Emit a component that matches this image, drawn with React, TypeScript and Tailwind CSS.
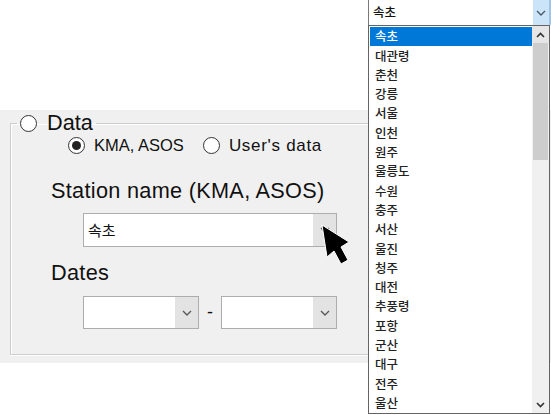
import React from "react";

const stations = [
  "속초", "대관령", "춘천", "강릉", "서울", "인천", "원주", "울릉도", "수원", "충주",
  "서산", "울진", "청주", "대전", "추풍령", "포항", "군산", "대구", "전주", "울산",
];

const kr = "font-['Noto_Sans_CJK_KR','Noto_Sans',sans-serif]";

function Chevron({ color = "#5a5a5a" }: { color?: string }) {
  return (
    <svg width="10" height="6" viewBox="0 0 10 6">
      <polyline points="1,1 5,5 9,1" fill="none" stroke={color} strokeWidth="1.4" />
    </svg>
  );
}

function Radio({ checked }: { checked?: boolean }) {
  return (
    <div className="w-[17px] h-[17px] rounded-full border border-[#333] bg-white flex items-center justify-center flex-none">
      {checked && <div className="w-[9px] h-[9px] rounded-full bg-[#222]" />}
    </div>
  );
}

function Combo({ w, h, text }: { w: string; h: string; text?: string }) {
  return (
    <div className={`${w} ${h} flex border border-[#adadad] bg-white`}>
      <div className={`flex-1 flex items-center pl-[4px] text-[15px] text-[#111] ${kr}`}>{text}</div>
      <div className="w-[23px] bg-[#e3e3e3] flex items-center justify-center">
        <Chevron />
      </div>
    </div>
  );
}

export default function App() {
  return (
    <div className="relative w-[551px] h-[415px] bg-white overflow-hidden font-['Liberation_Sans',Arial,sans-serif] text-[#111]">
      {/* Form panel */}
      <div className="mt-[110px] h-[253px] bg-[#f0f0f0] pt-[2px] pl-[10px]">
        <fieldset className="w-[440px] h-[243px] border border-[#cdcdcd] shadow-[1px_1px_0_#fff,inset_1px_1px_0_#fff]">
          <legend className="ml-[6px] px-[3px] h-[22px] flex items-center gap-[10px] text-[21.7px] leading-[22px]">
            <Radio />
            <span>Data</span>
          </legend>

          <div className="mt-[2px] ml-[57px] h-[19px] flex items-center text-[16.5px] leading-[19px]">
            <Radio checked />
            <span className="ml-[9px]">KMA, ASOS</span>
            <div className="ml-[19px]"><Radio /></div>
            <span className="ml-[9px] text-[17px] tracking-[0.7px]">User's data</span>
          </div>

          <div className="mt-[25px] ml-[40px] text-[21.7px] leading-[22px] tracking-[0.3px]">Station name (KMA, ASOS)</div>
          <div className="mt-[11px] ml-[72px]">
            <Combo w="w-[254px]" h="h-[34px]" text="속초" />
          </div>

          <div className="mt-[15px] ml-[40px] text-[21.7px] leading-[22px] tracking-[0.3px]">Dates</div>
          <div className="mt-[12px] ml-[72px] flex items-center">
            <Combo w="w-[116px]" h="h-[33px]" />
            <span className="w-[22px] text-center text-[18px]">-</span>
            <Combo w="w-[116px]" h="h-[33px]" />
          </div>
        </fieldset>
      </div>

      {/* Open dropdown */}
      <div className={`absolute left-[368px] top-0 w-[183px] h-[415px] ${kr}`}>
        <div className="h-[25px] flex border-l border-[#7a7a7a] bg-white">
          <div className="flex-1 flex items-center pl-[4px] text-[12.5px] font-medium">속초</div>
          <div className="w-[16px] bg-[#cce4f7] flex items-center justify-center">
            <Chevron color="#4a5a6a" />
          </div>
          <div className="w-[2px] bg-[#9ec5e8]" />
        </div>
        <div className="w-[182px] h-[389px] border border-[#646464] bg-white flex">
          <div className="flex-1 pt-[1px] pl-[1px]">
            {stations.map((s, i) => (
              <div
                key={s}
                className={`h-[19.3px] flex items-center pl-[5px] text-[12.5px] font-medium ${i === 0 ? "bg-[#0078d7] text-white" : "text-[#222]"}`}
              >
                {s}
              </div>
            ))}
          </div>
          <div className="w-[17px] bg-[#f0f0f0] flex flex-col">
            <div className="h-[17px] bg-[#e6e6e6] flex items-center justify-center">
              <svg width="9" height="6" viewBox="0 0 9 6">
                <polyline points="1,5 4.5,1.5 8,5" fill="none" stroke="#333" strokeWidth="1.6" />
              </svg>
            </div>
            <div className="mx-[1px] h-[117px] bg-[#cdcdcd]" />
            <div className="flex-1" />
            <div className="h-[17px] flex items-center justify-center">
              <svg width="9" height="6" viewBox="0 0 9 6">
                <polyline points="1,1 4.5,4.5 8,1" fill="none" stroke="#333" strokeWidth="1.6" />
              </svg>
            </div>
          </div>
        </div>
      </div>

      {/* Mouse cursor */}
      <svg className="absolute left-[319px] top-[222px]" width="34" height="46" viewBox="0 0 34 46">
        <polygon
          points="3,3 8,35 15,29 22,42 29,38 22,25 30,20"
          fill="#000"
          stroke="#fff"
          strokeWidth="1"
          strokeLinejoin="round"
        />
      </svg>
    </div>
  );
}
